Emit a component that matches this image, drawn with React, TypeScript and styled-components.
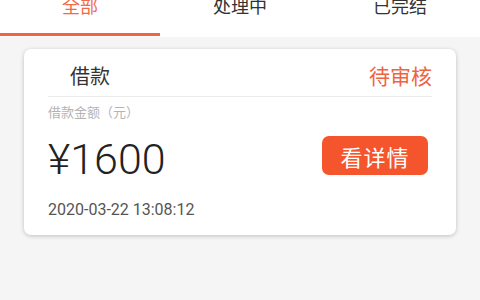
import styled, { createGlobalStyle } from "styled-components";

const tabs = [
  { id: 1, label: "全部" },
  { id: 2, label: "处理中" },
  { id: 3, label: "已完结" },
];

const GlobalStyle = createGlobalStyle`
  html, body {
    margin: 0;
    padding: 0;
    background-color: #f5f5f5;
    font-family: Roboto, "Noto Sans CJK SC", sans-serif;
  }
`;

const App = () => {
  const active = 1;

  return (
    <Page>
      <GlobalStyle />
      <TabBar>
        {tabs.map((t) => (
          <Tab key={t.id}>
            <TabLabel active={t.id === active}>{t.label}</TabLabel>
            <TabLine active={t.id === active} />
          </Tab>
        ))}
      </TabBar>
      <List>
        <Card>
          <CardHeader>
            <LoanType>借款</LoanType>
            <Status>待审核</Status>
          </CardHeader>
          <Label>借款金额（元）</Label>
          <AmountRow>
            <Amount>¥1600</Amount>
            <DetailBtn>看详情</DetailBtn>
          </AmountRow>
          <Time>2020-03-22 13:08:12</Time>
        </Card>
      </List>
    </Page>
  );
};

export default App;

const Page = styled.div`
  width: 480px;
  height: 300px;
  background-color: #f5f5f5;
  overflow: hidden;
`;

const TabBar = styled.div`
  height: 37px;
  background-color: #ffffff;
  display: grid;
  grid-template-columns: repeat(3, 1fr);
`;

const Tab = styled.div`
  display: flex;
  flex-direction: column;
  justify-content: space-between;
  align-items: center;
  height: 36px;
`;

const TabLabel = styled.div<{ active: boolean }>`
  font-size: 18px;
  line-height: 14px;
  color: ${(props) => (props.active ? "#ef6a48" : "#333333")};
`;

const TabLine = styled.div<{ active: boolean }>`
  width: 100%;
  height: 3px;
  background-color: ${(props) => (props.active ? "#f06440" : "transparent")};
`;

const List = styled.div`
  padding: 12px 24px 0;
`;

const Card = styled.div`
  background-color: #ffffff;
  border-radius: 7px;
  box-shadow: 0 1px 4px rgba(0, 0, 0, 0.22);
  padding: 0 24px 15px;
  display: flex;
  flex-direction: column;
`;

const CardHeader = styled.div`
  display: flex;
  justify-content: space-between;
  align-items: center;
  padding: 14px 0 5px;
  border-bottom: 1px solid #ececec;
  line-height: 28px;
`;

const LoanType = styled.span`
  font-size: 20px;
  color: #333333;
  margin-left: 22px;
`;

const Status = styled.span`
  font-size: 21px;
  color: #ef6440;
`;

const Label = styled.div`
  margin-top: 8px;
  font-size: 13px;
  line-height: 16px;
  color: #b4b4b4;
`;

const AmountRow = styled.div`
  margin-top: 14px;
  display: flex;
  justify-content: space-between;
  align-items: flex-start;
`;

const Amount = styled.div`
  font-size: 43px;
  font-weight: 300;
  line-height: 48px;
  color: #222222;
`;

const DetailBtn = styled.button`
  margin-top: 1px;
  margin-right: 4px;
  width: 106px;
  height: 39px;
  border: none;
  border-radius: 7px;
  background-color: #f5552d;
  color: #ffffff;
  font-family: Roboto, "Noto Sans CJK SC", sans-serif;
  font-size: 22px;
  letter-spacing: 1px;
  padding: 0;
`;

const Time = styled.div`
  margin-top: 17px;
  font-size: 16px;
  line-height: 20px;
  color: #555555;
`;
